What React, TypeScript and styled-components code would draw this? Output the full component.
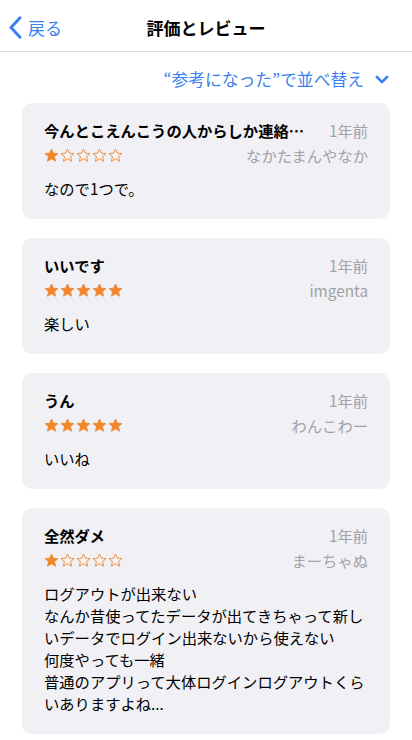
import * as React from "react";
import styled, { createGlobalStyle } from "styled-components";

const GlobalStyle = createGlobalStyle`
  html, body {
    margin: 0;
    padding: 0;
    background: #ffffff;
  }
  body {
    font-family: "Noto Sans CJK JP", "Noto Sans", sans-serif;
    color: #000000;
    -webkit-font-smoothing: antialiased;
  }
`;

const BLUE = "#3b80ee";
const GRAY = "#a2a2a7";
const STAR = "#f0862c";

const Page = styled.div`
  width: 412px;
  min-height: 740px;
  display: flex;
  flex-direction: column;
  padding-bottom: 20px;
`;

const NavBar = styled.header`
  height: 52px;
  display: grid;
  grid-template-columns: 1fr auto 1fr;
  align-items: center;
  border-bottom: 1px solid #dcdce0;
  padding-top: 4px;
  box-sizing: border-box;
`;

const BackButton = styled.button`
  display: flex;
  align-items: center;
  gap: 6px;
  padding: 0 0 0 9px;
  border: none;
  background: none;
  color: ${BLUE};
  font-family: inherit;
  font-size: 17px;
  line-height: 24px;
  justify-self: start;
`;

const NavTitle = styled.h1`
  margin: 0;
  font-size: 17px;
  font-weight: 700;
  line-height: 24px;
`;

const SortRow = styled.div`
  height: 51px;
  display: flex;
  justify-content: flex-end;
  align-items: center;
  gap: 11px;
  padding: 3px 23px 0 0;
  box-sizing: border-box;
  color: ${BLUE};
  font-size: 16.8px;
  line-height: 24px;
`;

const List = styled.div`
  display: flex;
  flex-direction: column;
  gap: 19px;
  padding: 0 22px;
`;

const Card = styled.article`
  background: #f0f0f5;
  border-radius: 10px;
  padding: 16px 22px 20px 22px;
`;

const Row = styled.div`
  display: flex;
  justify-content: space-between;
  align-items: center;
`;

const Title = styled.h2`
  margin: 0;
  font-size: 15.3px;
  font-weight: 700;
  line-height: 22px;
  white-space: nowrap;
  overflow: hidden;
  text-overflow: ellipsis;
  margin-right: 24px;
`;

const Meta = styled.span`
  color: ${GRAY};
  font-size: 15.3px;
  line-height: 22px;
  white-space: nowrap;
`;

const StarRow = styled(Row)`
  margin-top: 5px;
  height: 18px;
`;

const Stars = styled.div`
  display: flex;
  gap: 1px;
`;

const Body = styled.p`
  margin: 13px 0 0 0;
  font-size: 15.3px;
  line-height: 22px;
  white-space: pre-line;
`;

const ChevronLeft = () => (
  <svg width="13" height="23" viewBox="0 0 13 23" fill="none">
    <path d="M11 1.8 L2 11.5 L11 21.2" stroke={BLUE} strokeWidth="3" strokeLinecap="round" strokeLinejoin="round" />
  </svg>
);

const ChevronDown = () => (
  <svg width="14" height="9" viewBox="0 0 14 9" fill="none">
    <path d="M1.8 1.8 L7 7 L12.2 1.8" stroke={BLUE} strokeWidth="2.6" strokeLinecap="round" strokeLinejoin="round" />
  </svg>
);

const STAR_PATH =
  "M7.5 1 L9.4 5.2 L14 5.6 L10.5 8.6 L11.6 13.2 L7.5 10.8 L3.4 13.2 L4.5 8.6 L1 5.6 L5.6 5.2 Z";

const Star = ({ filled }: { filled: boolean }) => (
  <svg width="15" height="15" viewBox="0 0 15 15">
    <path
      d={STAR_PATH}
      fill={filled ? STAR : "none"}
      stroke={STAR}
      strokeWidth={filled ? 0.8 : 0.9}
      strokeLinejoin="round"
    />
  </svg>
);

type Review = {
  title: string;
  date: string;
  author: string;
  rating: number;
  body: string;
};

const reviews: Review[] = [
  {
    title: "今んとこえんこうの人からしか連絡…",
    date: "1年前",
    author: "なかたまんやなか",
    rating: 1,
    body: "なので1つで。",
  },
  {
    title: "いいです",
    date: "1年前",
    author: "imgenta",
    rating: 5,
    body: "楽しい",
  },
  {
    title: "うん",
    date: "1年前",
    author: "わんこわー",
    rating: 5,
    body: "いいね",
  },
  {
    title: "全然ダメ",
    date: "1年前",
    author: "まーちゃぬ",
    rating: 1,
    body:
      "ログアウトが出来ない\nなんか昔使ってたデータが出てきちゃって新し\nいデータでログイン出来ないから使えない\n何度やっても一緒\n普通のアプリって大体ログインログアウトくら\nいありますよね...",
  },
];

const ReviewCard = ({ review }: { review: Review }) => (
  <Card>
    <Row>
      <Title>{review.title}</Title>
      <Meta>{review.date}</Meta>
    </Row>
    <StarRow>
      <Stars>
        {[0, 1, 2, 3, 4].map(i => (
          <Star key={i} filled={i < review.rating} />
        ))}
      </Stars>
      <Meta>{review.author}</Meta>
    </StarRow>
    <Body>{review.body}</Body>
  </Card>
);

export default function App() {
  return (
    <Page>
      <GlobalStyle />
      <NavBar>
        <BackButton>
          <ChevronLeft />
          戻る
        </BackButton>
        <NavTitle>評価とレビュー</NavTitle>
        <span />
      </NavBar>
      <SortRow>
        <span>“参考になった”で並べ替え</span>
        <ChevronDown />
      </SortRow>
      <List>
        {reviews.map((r, i) => (
          <ReviewCard key={i} review={r} />
        ))}
      </List>
    </Page>
  );
}
